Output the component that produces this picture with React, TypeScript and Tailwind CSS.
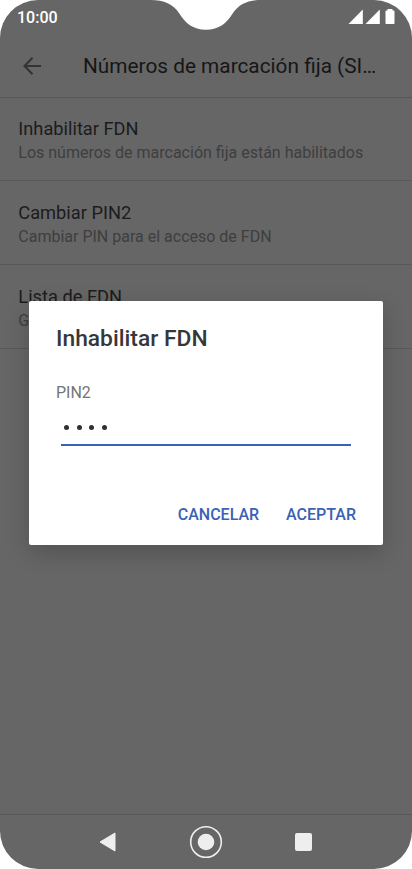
import React from 'react';

interface SettingItem {
  title: string;
  summary: string;
}

const settings: SettingItem[] = [
  { title: 'Inhabilitar FDN', summary: 'Los números de marcación fija están habilitados' },
  { title: 'Cambiar PIN2', summary: 'Cambiar PIN para el acceso de FDN' },
  { title: 'Lista de FDN', summary: 'G' },
];

const PIN_LENGTH = 4;

const Notch = () => (
  <svg className="absolute left-[151px] top-0" width="110" height="31" viewBox="0 0 110 31" fill="#fff">
    <path d="M0 0C13 0 22 4 28 13C34 23 42 29.8 55 29.8C68 29.8 76 23 82 13C88 4 97 0 110 0Z" />
  </svg>
);

const StatusBar = () => (
  <div className="flex h-[34px] items-start justify-between px-[17px] text-white">
    <span className="mt-2 text-[16px] font-medium leading-[20px]">10:00</span>
    <svg className="mt-2" width="48" height="17" viewBox="0 0 48 17" fill="currentColor">
      <path d="M1.500 16L15.800 1.500V16Z" />
      <path d="M18.500 16L32.800 1.500V16Z" />
      <path d="M40.500 1h5v1.500h1.200q.8 0 .8.8V15.200q0 .8-.8.8h-7.400q-.8 0-.8-.8V3.300q0-.8.8-.8h1.200z" />
    </svg>
  </div>
);

const AppBar = () => (
  <div className="flex h-[64px] items-center border-b border-[#5a5757] pl-[23px]">
    <svg width="19" height="18" viewBox="0 0 19 18" fill="none" stroke="#333335" strokeWidth="2">
      <path d="M9.500 .8L1.500 9L9.500 17.200M1.500 9H18" />
    </svg>
    <h1 className="ml-[41px] text-[20.800px] leading-[28px] text-[#161616]">Números de marcación fija (SI…</h1>
  </div>
);

const SettingRow = ({ item }: { item: SettingItem }) => (
  <div className="h-[84px] border-b border-[#595959] pl-[18.300px] pt-[20px]">
    <div className="text-[18.250px] leading-[24px] text-[#1c1c1c]">{item.title}</div>
    <div className="text-[16px] leading-[24px] text-[#3e3e3e]">{item.summary}</div>
  </div>
);

const PinDialog = () => (
  <div className="absolute left-[29px] top-[301px] flex h-[244px] w-[354px] flex-col rounded-[2px] bg-white px-[27px] shadow-[0_8px_24px_rgba(0,0,0,0.2)]">
    <h2 className="mt-[23px] text-[22.800px] font-medium leading-[30px] text-[#37373a]">Inhabilitar FDN</h2>
    <label className="mt-[28px] text-[16px] leading-[22px] text-[#757575]">PIN2</label>
    <div className="mx-[5px] flex h-[42px] items-center gap-[7.700px] border-b-2 border-[#3a63b8] pl-[3px]">
      {Array.from({ length: PIN_LENGTH }, (_, i) => (
        <span key={i} className="mt-[7px] size-[5px] rounded-full bg-[#303033]" />
      ))}
    </div>
    <div className="mt-[57px] flex justify-end gap-[27px] text-[16px] font-medium leading-[24px] text-[#3a61b5]">
      <button>CANCELAR</button>
      <button>ACEPTAR</button>
    </div>
  </div>
);

const NavBar = () => (
  <div className="flex h-[55px] items-center border-t border-[#595959] text-[#eee]">
    <svg className="ml-[99px]" width="17" height="20" viewBox="0 0 17 20" fill="currentColor" stroke="currentColor" strokeLinejoin="round">
      <path d="M1 10L16 1V19Z" />
    </svg>
    <svg className="ml-[73px]" width="34" height="34" viewBox="0 0 34 34">
      <circle cx="17" cy="17" r="15.300" fill="none" stroke="currentColor" strokeWidth="1.600" />
      <circle cx="17" cy="17" r="8.300" fill="currentColor" />
    </svg>
    <div className="ml-[71.500px] size-[17.500px] rounded-[2px] bg-[#eee]" />
  </div>
);

export default function App() {
  return (
    <div className="h-[869px] w-[412px] bg-white font-[Roboto,sans-serif]">
      <div className="relative flex h-full flex-col overflow-hidden rounded-[38px] bg-[#666]">
        <StatusBar />
        <AppBar />
        <div className="-mt-px flex-1">
          {settings.map((item) => (
            <SettingRow key={item.title} item={item} />
          ))}
        </div>
        <NavBar />
        <Notch />
        <PinDialog />
      </div>
    </div>
  );
}
